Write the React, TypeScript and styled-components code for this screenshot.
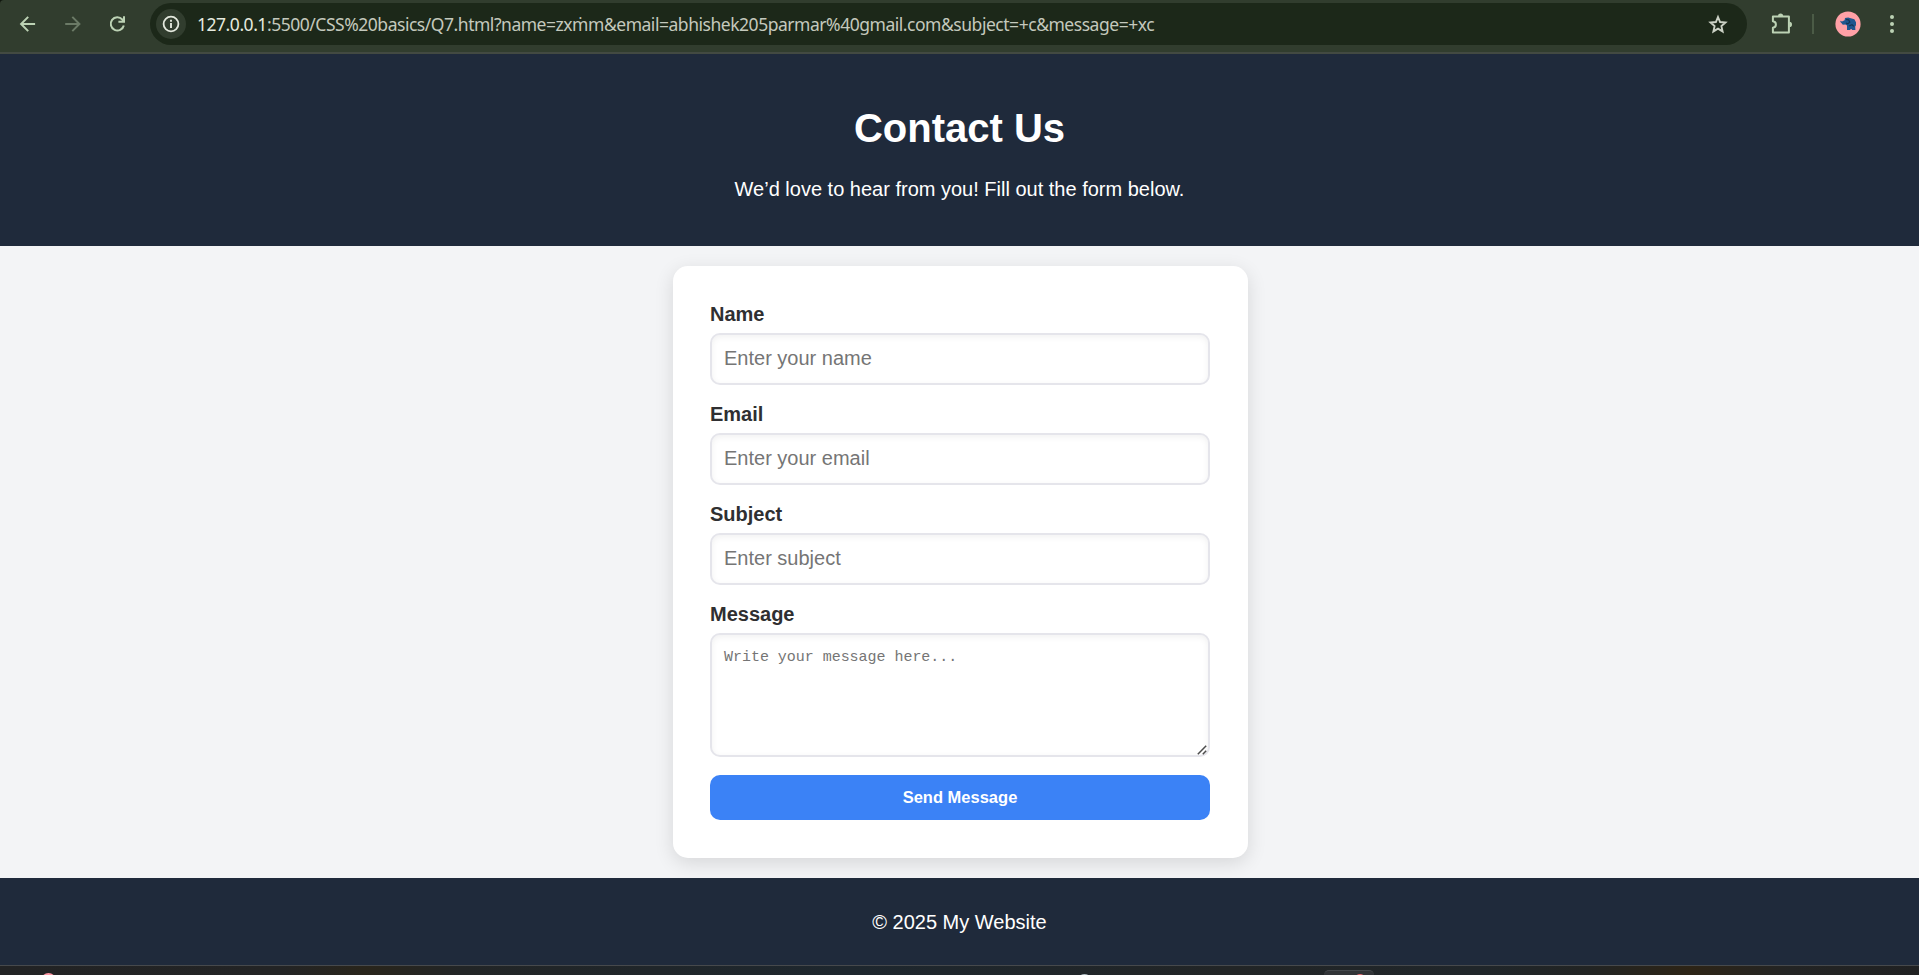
import React from "react";
import styled, { createGlobalStyle } from "styled-components";

const GlobalStyle = createGlobalStyle`
  *, *::before, *::after { box-sizing: border-box; }
  body {
    margin: 0;
    height: 975px;
    overflow: hidden;
    background: #f3f4f6;
    font-family: "Liberation Sans", Arial, sans-serif;
    font-size: 20px;
  }
`;

const Screen = styled.div`
  display: flex;
  flex-direction: column;
  height: 975px;
  background: #f3f4f6;
`;

/* Browser toolbar */
const ToolbarFrame = styled.div`
  background: #10160e;
  flex: none;
`;

const Toolbar = styled.div`
  display: flex;
  align-items: flex-start;
  height: 54px;
  padding-top: 3px;
  background: #313d2e;
  border-bottom: 2px solid #434a42;
  border-top-left-radius: 4px;
`;

const NavButtons = styled.div`
  display: flex;
  align-items: center;
  gap: 21px;
  width: 150px;
  height: 41px;
  padding-left: 16px;
`;

const NavIcon = styled.svg<{ $dim?: boolean }>`
  width: 24px;
  height: 24px;
  fill: none;
  stroke: ${(p) => (p.$dim ? "#6b7a66" : "#bcd2b4")};
  stroke-width: 2;
`;

const AddressBar = styled.div`
  display: flex;
  align-items: center;
  width: 1597px;
  height: 42px;
  padding: 0 17px 0 6px;
  border-radius: 21px;
  background: #1c2819;
`;

const InfoBadge = styled.span`
  display: grid;
  place-items: center;
  width: 30px;
  height: 30px;
  border-radius: 50%;
  background: #313d2e;
`;

const Url = styled.span`
  flex: 1;
  padding-left: 11px;
  color: #c4c9bd;
  font: 17.5px/24px "Noto Sans", "Open Sans", sans-serif;
  letter-spacing: -0.47px;
  white-space: nowrap;
`;

const Host = styled.span`
  color: #e6eadf;
`;

const Star = styled.svg`
  width: 24px;
  height: 24px;
  fill: none;
  stroke: #cbd1c5;
  stroke-width: 1.9;
`;

const Actions = styled.div`
  display: flex;
  align-items: center;
  height: 42px;
`;

const Extension = styled.svg`
  width: 24px;
  height: 24px;
  margin-left: 22px;
  fill: none;
  stroke: #bcd2b4;
  stroke-width: 2;
`;

const Divider = styled.span`
  width: 2px;
  height: 20px;
  margin: 0 21px 0 19px;
  background: #4b5b46;
`;

const Avatar = styled.svg`
  width: 26px;
  height: 26px;
`;

const MenuDots = styled.svg`
  width: 6px;
  height: 20px;
  margin-left: 28px;
  fill: #bcd2b4;
`;

/* Contact page */
const PageHeader = styled.header`
  flex: none;
  height: 192px;
  padding-top: 51px;
  text-align: center;
  color: #fff;
  background: #1f2a3b;
`;

const Title = styled.h1`
  margin: 0;
  font-size: 40px;
  line-height: 46px;
`;

const Intro = styled.p`
  margin: 26px 0 0;
  line-height: 24px;
`;

const Main = styled.main`
  flex: none;
  display: flex;
  justify-content: center;
  height: 632px;
  padding: 20px 0 20px 2px;
  overflow: hidden;
`;

const Card = styled.form`
  display: flex;
  flex-direction: column;
  width: 575px;
  height: 592px;
  padding: 36px 38px 38px 37px;
  border-radius: 15px;
  background: #fff;
  box-shadow: 0 5px 19px rgba(0, 0, 0, 0.12);
`;

const Field = styled.label`
  display: flex;
  flex-direction: column;
  gap: 7px;
  margin-bottom: 17px;
  &:last-of-type { margin-bottom: 18px; }
`;

const FieldName = styled.span`
  color: #2f2f31;
  font-weight: 700;
  line-height: 24px;
`;

const Input = styled.input`
  width: 100%;
  height: 52px;
  padding: 0 12px 2px;
  border: 2px solid #e5e5eb;
  border-radius: 10px;
  background: #fff;
  box-shadow: inset 0 2px 6px rgba(0, 0, 0, 0.06);
  font: 20px "Liberation Sans", Arial, sans-serif;
  &::placeholder { color: #757575; }
`;

const TextAreaFrame = styled.span`
  position: relative;
  display: block;
`;

const TextArea = styled.textarea`
  display: block;
  width: 100%;
  height: 124px;
  padding: 13px 12px 12px;
  border: 2px solid #e5e5eb;
  border-radius: 10px;
  background: #fff;
  box-shadow: inset 0 2px 6px rgba(0, 0, 0, 0.06);
  font: 15px/20px "Liberation Mono", monospace;
  letter-spacing: -0.03px;
  resize: none;
  &::placeholder { color: #757575; }
`;

const ResizeGrip = styled.svg`
  position: absolute;
  right: 3px;
  bottom: 2px;
  width: 10px;
  height: 10px;
  fill: none;
  stroke: #4c4c4c;
  stroke-width: 1.5;
`;

const SendButton = styled.button`
  height: 45px;
  padding: 0;
  border: 0;
  border-radius: 10px;
  color: #fff;
  background: #3b82f6;
  font: 700 16.5px "Liberation Sans", Arial, sans-serif;
`;

const PageFooter = styled.footer`
  flex: none;
  height: 87px;
  padding-top: 32px;
  text-align: center;
  line-height: 24px;
  color: #fff;
  background: #1f2a3b;
`;

/* Visible sliver of the desktop taskbar */
const Taskbar = styled.div`
  position: relative;
  flex: none;
  height: 10px;
  border-top: 1px solid #46494c;
  overflow: hidden;
  background: linear-gradient(
    90deg, #222324 0, #232425 280px, #29251b 365px, #222526 460px,
    #1e272e 850px, #222526 1230px, #20262a 1480px, #222423 1590px,
    #2d2416 1690px, #232424 1790px, #202122 100%
  );
`;

const TaskDot = styled.span<{ $x: number; $y: number; $w: number; $color: string }>`
  position: absolute;
  left: ${(p) => p.$x}px;
  top: ${(p) => p.$y}px;
  width: ${(p) => p.$w}px;
  height: ${(p) => p.$w}px;
  border-radius: 50%;
  background: ${(p) => p.$color};
`;

const ActiveTask = styled.span`
  position: absolute;
  left: 1324px;
  top: 4px;
  width: 50px;
  height: 40px;
  border-radius: 5px;
  border-top: 1px solid #44484b;
  background: #313437;
`;

const fields = [
  { label: "Name", name: "name", type: "text", placeholder: "Enter your name" },
  { label: "Email", name: "email", type: "email", placeholder: "Enter your email" },
  { label: "Subject", name: "subject", type: "text", placeholder: "Enter subject" },
];

function BrowserToolbar() {
  return (
    <ToolbarFrame>
      <Toolbar>
        <NavButtons>
          <NavIcon viewBox="0 0 24 24">
            <path d="M19.1 12H5.6M12.2 4.9 5.1 12l7.1 7.1" />
          </NavIcon>
          <NavIcon viewBox="0 0 24 24" $dim>
            <path d="M4.2 12h13.7M11.3 4.9l7.1 7.1-7.1 7.1" />
          </NavIcon>
          <NavIcon viewBox="0 0 24 24">
            <path d="M17.8 13.4a6.6 6.6 0 1 1-1.5-5.9l1.3 1.5M18 4.2v5.6h-5.6" />
          </NavIcon>
        </NavButtons>
        <AddressBar>
          <InfoBadge>
            <svg width="18" height="18" viewBox="0 0 18 18">
              <circle cx="9" cy="9" r="7.4" fill="none" stroke="#e3e8dd" strokeWidth="1.8" />
              <path d="M9 8v5M9 4.8v2" stroke="#e3e8dd" strokeWidth="1.9" />
            </svg>
          </InfoBadge>
          <Url>
            <Host>127.0.0.1</Host>
            :5500/CSS%20basics/Q7.html?name=zxṁm&amp;email=abhishek205parmar%40gmail.com&amp;subject=+c&amp;message=+xc
          </Url>
          <Star viewBox="0 0 24 24">
            <path d="m12 5 2.1 5 5.4.5-4.1 3.6 1.2 5.3L12 16.6l-4.6 2.8 1.2-5.3-4.1-3.6 5.4-.5z" />
          </Star>
        </AddressBar>
        <Actions>
          <Extension viewBox="0 0 24 24">
            <path d="M3.9 4.5h16v16h-16v-4.8c4-.6 4-5.9 0-6.5z" strokeLinejoin="round" />
            <path d="M9 4a2.6 2.6 0 0 1 5.2 0zM20.4 9.8a2.6 2.6 0 0 1 0 5.2z" fill="#bcd2b4" stroke="none" />
          </Extension>
          <Divider />
          <Avatar viewBox="0 0 26 26">
            <circle cx="13" cy="13" r="12.6" fill="#ffa0a6" />
            <path
              d="M5.2 9.7 7 10.4 9.6 9.2 10 7l3.2-.6 2.6.8 3.6 1 1.6 3v3l-.8 1.2.2 3.6h-3.6v-1h-1.4v1h-3.4v-4.6l-1.6-1-2.6.3-1.4-1.7-.8-.7z"
              fill="#1f568f"
            />
            <path d="m11 8.4 2.6.4 1.2 2.4-2 1.6-1.8-.8M14 15l3-1.2 2 1.6" fill="none" stroke="#173454" strokeWidth="1.2" />
          </Avatar>
          <MenuDots viewBox="0 0 6 20">
            <circle cx="3" cy="3" r="2" />
            <circle cx="3" cy="10" r="2" />
            <circle cx="3" cy="17" r="2" />
          </MenuDots>
        </Actions>
      </Toolbar>
    </ToolbarFrame>
  );
}

export default function App() {
  return (
    <Screen>
      <GlobalStyle />
      <BrowserToolbar />
      <PageHeader>
        <Title>Contact Us</Title>
        <Intro>We’d love to hear from you! Fill out the form below.</Intro>
      </PageHeader>
      <Main>
        <Card onSubmit={(e: React.FormEvent) => e.preventDefault()}>
          {fields.map((f) => (
            <Field key={f.name}>
              <FieldName>{f.label}</FieldName>
              <Input type={f.type} name={f.name} placeholder={f.placeholder} />
            </Field>
          ))}
          <Field>
            <FieldName>Message</FieldName>
            <TextAreaFrame>
              <TextArea name="message" placeholder="Write your message here..." />
              <ResizeGrip viewBox="0 0 10 10">
                <path d="M.8 9.2 9.2.8M5.8 9.2l3.4-3.4" />
              </ResizeGrip>
            </TextAreaFrame>
          </Field>
          <SendButton type="submit">Send Message</SendButton>
        </Card>
      </Main>
      <PageFooter>© 2025 My Website</PageFooter>
      <Taskbar>
        <TaskDot $x={41} $y={7} $w={15} $color="#ff98a4" />
        <TaskDot $x={1077} $y={8} $w={15} $color="#aebbc1" />
        <ActiveTask />
        <TaskDot $x={1354} $y={8} $w={12} $color="#e36a70" />
      </Taskbar>
    </Screen>
  );
}
